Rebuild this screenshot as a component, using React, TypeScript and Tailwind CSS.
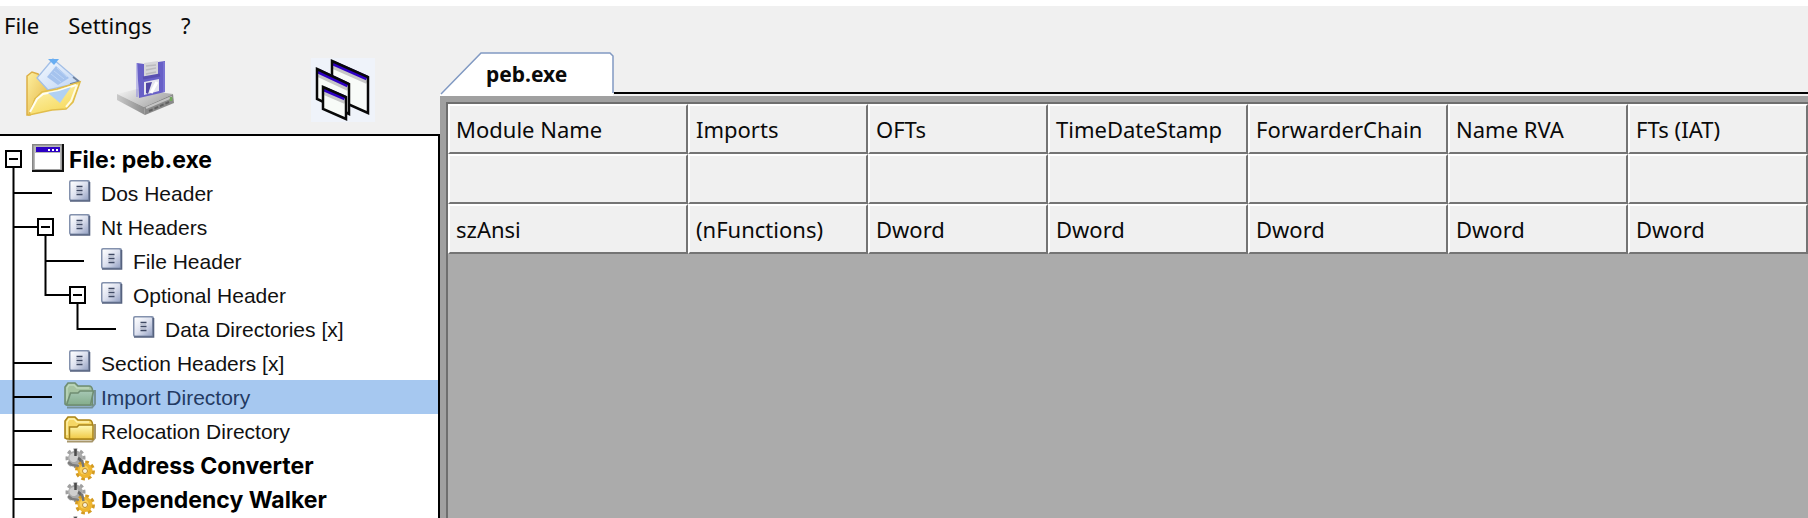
import React from "react";

type Guide = "root" | "tee" | "elbow" | "pipe" | "end" | "box" | "blank";
type IconName = "window" | "doc" | "folder" | "folderOpen" | "gears";

interface TreeRow {
  label: string;
  guides: Guide[];
  icon: IconName;
  bold?: boolean;
  selected?: boolean;
}

const rows: TreeRow[] = [
  { label: "File: peb.exe", guides: ["root"], icon: "window", bold: true },
  { label: "Dos Header", guides: ["tee", "end"], icon: "doc" },
  { label: "Nt Headers", guides: ["tee", "box"], icon: "doc" },
  { label: "File Header", guides: ["pipe", "tee", "end"], icon: "doc" },
  { label: "Optional Header", guides: ["pipe", "elbow", "box"], icon: "doc" },
  { label: "Data Directories [x]", guides: ["pipe", "blank", "elbow", "end"], icon: "doc" },
  { label: "Section Headers [x]", guides: ["tee", "end"], icon: "doc" },
  { label: "Import Directory", guides: ["tee", "end"], icon: "folderOpen", selected: true },
  { label: "Relocation Directory", guides: ["tee", "end"], icon: "folder" },
  { label: "Address Converter", guides: ["tee", "end"], icon: "gears", bold: true },
  { label: "Dependency Walker", guides: ["tee", "end"], icon: "gears", bold: true },
  { label: "", guides: ["tee", "end"], icon: "gears", bold: true },
];

const guidePaths: Record<Guide, string> = {
  root: "M13.5 25V34",
  tee: "M13.5 0V34M13.5 17H32",
  elbow: "M13.5 0V17H32",
  pipe: "M13.5 0V34",
  end: "M0 17H20",
  box: "M0 17H5M13.5 25V34",
  blank: "",
};

function GuideCell({ kind }: { kind: Guide }) {
  const drawing = (
    <svg width="32" height="34" viewBox="0 0 32 34" fill="none" stroke="#000" strokeWidth="2">
      <path d={guidePaths[kind]} />
      {(kind === "root" || kind === "box") && (
        <>
          <rect x="6" y="9" width="15" height="16" fill="#fff" />
          <path d="M9 17H18" />
        </>
      )}
    </svg>
  );
  if (kind === "root" || kind === "box") {
    return (
      <button type="button" aria-label="Collapse" className="shrink-0">
        {drawing}
      </button>
    );
  }
  return <span className="shrink-0">{drawing}</span>;
}

function WindowIcon() {
  return (
    <svg width="32" height="34" viewBox="0 0 32 34">
      <rect x="0" y="2" width="32" height="28" fill="#111" />
      <rect x="0" y="2" width="30" height="26" fill="#858585" />
      <rect x="1.500" y="3.500" width="28" height="24" fill="#b8b8b8" />
      <rect x="4" y="5" width="24" height="5" fill="#2c00c4" />
      <path d="M16 8h2M20 8h2M24 8h2" stroke="#fff" strokeWidth="2" />
      <rect x="3" y="11" width="25" height="16" fill="#fff" />
    </svg>
  );
}

function DocIcon() {
  return (
    <svg width="32" height="34" viewBox="0 0 32 34">
      <defs>
        <linearGradient id="docFace" x1="0" y1="0" x2="1" y2="1">
          <stop offset="0" stopColor="#fff" />
          <stop offset="0.5" stopColor="#dde1ef" />
          <stop offset="1" stopColor="#97a3c4" />
        </linearGradient>
      </defs>
      <rect x="5" y="4" width="21" height="21" rx="2" fill="#8391ad" />
      <path d="M6 25H25.500V6" fill="none" stroke="#56627f" strokeWidth="1.600" />
      <rect x="6.500" y="5.500" width="17.500" height="18" rx="1" fill="url(#docFace)" />
      <path d="M12.500 10.500h6M12.500 14.500h6M12.500 18.500h6" stroke="#3f4963" strokeWidth="1.700" />
      <path d="M12 12.500h6M12 16.500h6" stroke="#b4bacb" strokeWidth="0.800" />
    </svg>
  );
}

function FolderIcon({ open }: { open?: boolean }) {
  const edge = open ? "#6f8d72" : "#a98419";
  const dark = open ? "#5d7568" : "#79601d";
  const back = open ? "#a5c3a2" : "#f5d765";
  return (
    <svg width="32" height="34" viewBox="0 0 32 34">
      <defs>
        <linearGradient id="folderFace" x1="0" y1="0" x2="0" y2="1">
          <stop offset="0" stopColor="#fffbb8" />
          <stop offset="1" stopColor="#f0c843" />
        </linearGradient>
        <linearGradient id="folderOpenFace" x1="0" y1="0" x2="0" y2="1">
          <stop offset="0" stopColor="#a6c7b4" />
          <stop offset="1" stopColor="#84ad8b" />
        </linearGradient>
      </defs>
      <path d="M3 27.500H28L31 24V10" fill="none" stroke={dark} strokeOpacity="0.650" strokeWidth="2" />
      <path d="M1 24V7L4 3H11L14 6H25Q28 6 28.500 10V25H3Z" fill={back} stroke={edge} strokeWidth="1.600" />
      <path d="M3 21V8L5 5H10L13 8H25" fill="none" stroke={open ? "#bdd8bd" : "#fff3ac"} strokeWidth="1.400" />
      {open ? (
        <path d="M2.500 25L6.500 13H14L16 11H29.500L26.500 25Z" fill="url(#folderOpenFace)" stroke={edge} strokeWidth="1.600" />
      ) : (
        <path d="M5.500 25V13H13L15 11H29V25Z" fill="url(#folderFace)" stroke={edge} strokeWidth="1.500" />
      )}
    </svg>
  );
}

function GearsIcon() {
  return (
    <svg width="32" height="34" viewBox="0 0 32 34">
      <g transform="rotate(-15 12 10)">
        <circle cx="11.500" cy="10" r="8.500" fill="none" stroke="#a0a0a0" strokeWidth="3" strokeDasharray="3.600 3.080" />
        <circle cx="11.500" cy="10" r="7.500" fill="#a9a9a9" />
        <circle cx="10" cy="9" r="4.500" fill="#cfcfcf" />
      </g>
      <path d="M4 14L8 17L14 18L18 21" fill="none" stroke="#7c7c7c" strokeWidth="2.500" />
      <path d="M11.500 1V8" stroke="#4b4b4b" strokeWidth="2.500" />
      <path d="M14 10Q18 12 19 20" fill="none" stroke="#686868" strokeWidth="3" />
      <circle cx="21" cy="22.500" r="8" fill="none" stroke="#d39a22" strokeWidth="4" strokeDasharray="3.400 2.880" />
      <circle cx="21" cy="22.500" r="7.500" fill="#eeb52f" />
      <circle cx="20" cy="22" r="4.500" fill="#fad15b" />
      <circle cx="21" cy="23" r="2.500" fill="#f8f1d9" stroke="#c18b27" />
      <path d="M18 12L19.500 19" stroke="#777" strokeWidth="2.500" />
    </svg>
  );
}

function TreeIcon({ name }: { name: IconName }) {
  switch (name) {
    case "window":
      return <WindowIcon />;
    case "doc":
      return <DocIcon />;
    case "folder":
      return <FolderIcon />;
    case "folderOpen":
      return <FolderIcon open />;
    case "gears":
      return <GearsIcon />;
  }
}

function OpenIcon() {
  return (
    <svg width="64" height="64" viewBox="0 0 64 64">
      <defs>
        <linearGradient id="openBack" x1="0" y1="0" x2="1" y2="1">
          <stop offset="0" stopColor="#fdf0a0" />
          <stop offset="1" stopColor="#e3b13d" />
        </linearGradient>
        <linearGradient id="openFront" x1="0" y1="0" x2="0.6" y2="1">
          <stop offset="0" stopColor="#fff8bf" />
          <stop offset="1" stopColor="#f6d95c" />
        </linearGradient>
        <linearGradient id="openPaper" x1="0" y1="0" x2="1" y2="1">
          <stop offset="0" stopColor="#f7fbff" />
          <stop offset="1" stopColor="#bcd3f4" />
        </linearGradient>
      </defs>
      <path d="M7 57V18L12 14L18 16L30 32L15 41L10 57Z" fill="url(#openBack)" stroke="#dcae45" strokeWidth="1.500" />
      <path d="M33 1L59 23L50 27L28 32L17 20Z" fill="url(#openPaper)" stroke="#a3bfe6" strokeWidth="1.300" />
      <path d="M28 1H39L34 7Z" fill="#69aef2" />
      <path d="M36 8L49 20L38 27L27 19Z" fill="#a5c3ee" />
      <path d="M31 16L41 24M34 13L44 21M37 10L47 19" stroke="#bed5f5" strokeWidth="1" />
      <path d="M53 19L59 23.500L50 26" fill="none" stroke="#71829c" strokeWidth="1.600" />
      <path d="M9 57L15 41L22 34L37 31L60 24L53 44L46 51L32 52Z" fill="url(#openFront)" stroke="#e1bd4c" strokeWidth="1.600" />
      <path d="M10 54L17 41L23 36L38 33L56 27" fill="none" stroke="#fffef2" strokeWidth="2" />
      <path d="M28 35L39 33L51 29L40 45Z" fill="#b1d1f3" />
      <path d="M57 27L51 43L46 49" fill="none" stroke="#fffbe1" strokeWidth="2" />
    </svg>
  );
}

function SaveIcon() {
  return (
    <svg width="64" height="64" viewBox="0 0 64 64">
      <defs>
        <linearGradient id="driveTop" x1="0" y1="0" x2="1" y2="0.5">
          <stop offset="0" stopColor="#f6f6f6" />
          <stop offset="1" stopColor="#a8a8a8" />
        </linearGradient>
        <linearGradient id="driveSide" x1="0" y1="0" x2="1" y2="0">
          <stop offset="0" stopColor="#c9c9c9" />
          <stop offset="1" stopColor="#8b8b8b" />
        </linearGradient>
      </defs>
      <path d="M5 36L25 31L61 36L32 49Z" fill="url(#driveTop)" />
      <path d="M5 36L32 49L33 57L5 42Z" fill="url(#driveSide)" />
      <path d="M32 49L61 36L62 45L33 57Z" fill="#8a8a8a" />
      <path d="M34 50L60 39" stroke="#c4c4c4" strokeWidth="2" />
      <path d="M37 53L57 44" stroke="#616161" strokeWidth="2" strokeDasharray="4 2" />
      <path d="M59 39V43" stroke="#72a95b" strokeWidth="2.500" />
      <path d="M25 5L32 6V18L46 16V4L53 3V34L27 40Z" fill="#6860c7" />
      <path d="M32 5L46 3V17L32 19Z" fill="#d6d6d9" />
      <path d="M34 8L44 7M34 12L44 10M34 16L44 14" stroke="#bababe" strokeWidth="1.500" />
      <path d="M32 24L47 21V33L32 37Z" fill="#e5e5ef" />
      <path d="M34 25L40 24L36 36L34 35Z" fill="#5146a4" />
      <path d="M45 24L39 35" stroke="#fff" strokeWidth="3" />
      <path d="M31 20L48 17" stroke="#5950b1" strokeWidth="3" />
      <path d="M25 5V39M52 4V34" stroke="#8b86df" strokeWidth="1" />
    </svg>
  );
}

function CascadeIcon() {
  return (
    <svg width="64" height="64" viewBox="0 0 64 64">
      <rect width="64" height="64" fill="#eff3fa" />
      <path d="M21 3L57 19V55L21 39Z" fill="#f8fbf8" />
      <path d="M22 9L56 24" stroke="#c7c7c7" strokeWidth="4" />
      <path d="M22 5L56 20" stroke="#2f00c4" strokeWidth="5" />
      <path d="M21 3L57 19V55L21 39Z" fill="none" stroke="#080808" strokeWidth="2.500" />
      <path d="M6 11L38 26V56L6 41Z" fill="#f8fbf8" />
      <path d="M7 17L37 31" stroke="#c7c7c7" strokeWidth="4" />
      <path d="M7 13L37 27" stroke="#2f00c4" strokeWidth="5" />
      <path d="M6 11L38 26V56L6 41Z" fill="none" stroke="#080808" strokeWidth="2.500" />
      <path d="M12 29L35 39V61L12 51Z" fill="#f8fbf8" />
      <path d="M13 35L34 44" stroke="#c7c7c7" strokeWidth="4" />
      <path d="M13 31L34 40" stroke="#2f00c4" strokeWidth="5" />
      <path d="M12 29L35 39V61L12 51Z" fill="none" stroke="#080808" strokeWidth="2.500" />
    </svg>
  );
}

function TreeItem({ row }: { row: TreeRow }) {
  return (
    <li className={row.selected ? "flex h-[34px] bg-[#a6c8f0]" : "flex h-[34px]"}>
      {row.guides.map((kind, i) => (
        <GuideCell key={i} kind={kind} />
      ))}
      <button type="button" className="flex items-center gap-[5px] whitespace-nowrap">
        <TreeIcon name={row.icon} />
        <span
          className={
            row.bold
              ? "pt-0.5 font-['Inter',sans-serif] text-[23px] leading-8 font-bold text-black"
              : row.selected
                ? "pt-0.5 font-['Liberation_Sans',sans-serif] text-[21px] leading-8 text-[#233a62]"
                : "pt-0.5 font-['Liberation_Sans',sans-serif] text-[21px] leading-8 text-[#111]"
          }
        >
          {row.label}
        </span>
      </button>
    </li>
  );
}

const columns = ["Module Name", "Imports", "OFTs", "TimeDateStamp", "ForwarderChain", "Name RVA", "FTs (IAT)"];
const widths = ["w-[240px]", "w-[180px]", "w-[180px]", "w-[200px]", "w-[200px]", "w-[180px]", "w-[180px]"];
const types = ["szAnsi", "(nFunctions)", "Dword", "Dword", "Dword", "Dword", "Dword"];

const cell =
  "h-[50px] border-2 border-t-white border-l-white border-r-[#747474] border-b-[#747474] bg-[#f0f0f0] px-1.5 py-0 text-left font-normal whitespace-nowrap";

function ImportTable() {
  return (
    <table className="w-full table-fixed border-separate border-spacing-0 text-[22px] leading-[30px]">
      <thead>
        <tr>
          {columns.map((name, i) => (
            <th key={name} scope="col" className={`${cell} ${widths[i]}`}>
              {name}
            </th>
          ))}
        </tr>
      </thead>
      <tbody>
        <tr>
          {columns.map((name) => (
            <td key={name} className={cell} />
          ))}
        </tr>
        <tr>
          {types.map((name, i) => (
            <td key={columns[i]} className={cell}>
              {name}
            </td>
          ))}
        </tr>
      </tbody>
    </table>
  );
}

export default function App() {
  return (
    <div className="flex h-screen flex-col overflow-hidden border-t-6 border-white bg-[#f0f0f0] font-['Noto_Sans',sans-serif] text-[#0a0a0a]">
      <nav className="flex h-10 shrink-0 items-end gap-[29px] px-1 pb-1.5 text-[22px] leading-[30px]">
        <button type="button">File</button>
        <button type="button">Settings</button>
        <button type="button">?</button>
      </nav>
      <div className="flex min-h-0 grow">
        <aside className="flex w-[440px] shrink-0 flex-col">
          <div className="flex h-[88px] shrink-0 items-start pt-3 pl-5">
            <button type="button" aria-label="Open">
              <OpenIcon />
            </button>
            <button type="button" aria-label="Save" className="ml-7">
              <SaveIcon />
            </button>
            <button type="button" aria-label="Windows" className="ml-[135px]">
              <CascadeIcon />
            </button>
          </div>
          <ul className="grow overflow-hidden border-t-2 border-r-2 border-black bg-white pt-1.5">
            {rows.map((row, i) => (
              <TreeItem key={i} row={row} />
            ))}
          </ul>
        </aside>
        <main className="flex min-w-0 grow flex-col">
          <div className="flex h-[50px] shrink-0 items-end">
            <button type="button" className="relative h-11 w-[174px] shrink-0 pl-[46px] text-left text-[21px] leading-10 font-bold">
              <svg className="absolute inset-0" width="174" height="44" viewBox="0 0 174 44">
                <path d="M0 44V42L41 1H170L173 4V44Z" fill="#fff" />
                <path d="M1 42L41 1H170L173 4V41" fill="none" stroke="#8199c2" strokeWidth="1.500" />
              </svg>
              <span className="relative">peb.exe</span>
            </button>
            <div className="h-1 grow border-t-2 border-black" />
          </div>
          <div className="grow border-t-6 border-l-6 border-[#a0a0a0]">
            <div className="h-full border-t-2 border-l-2 border-[#6e6e6e] bg-[#ababab]">
              <ImportTable />
            </div>
          </div>
        </main>
      </div>
    </div>
  );
}
